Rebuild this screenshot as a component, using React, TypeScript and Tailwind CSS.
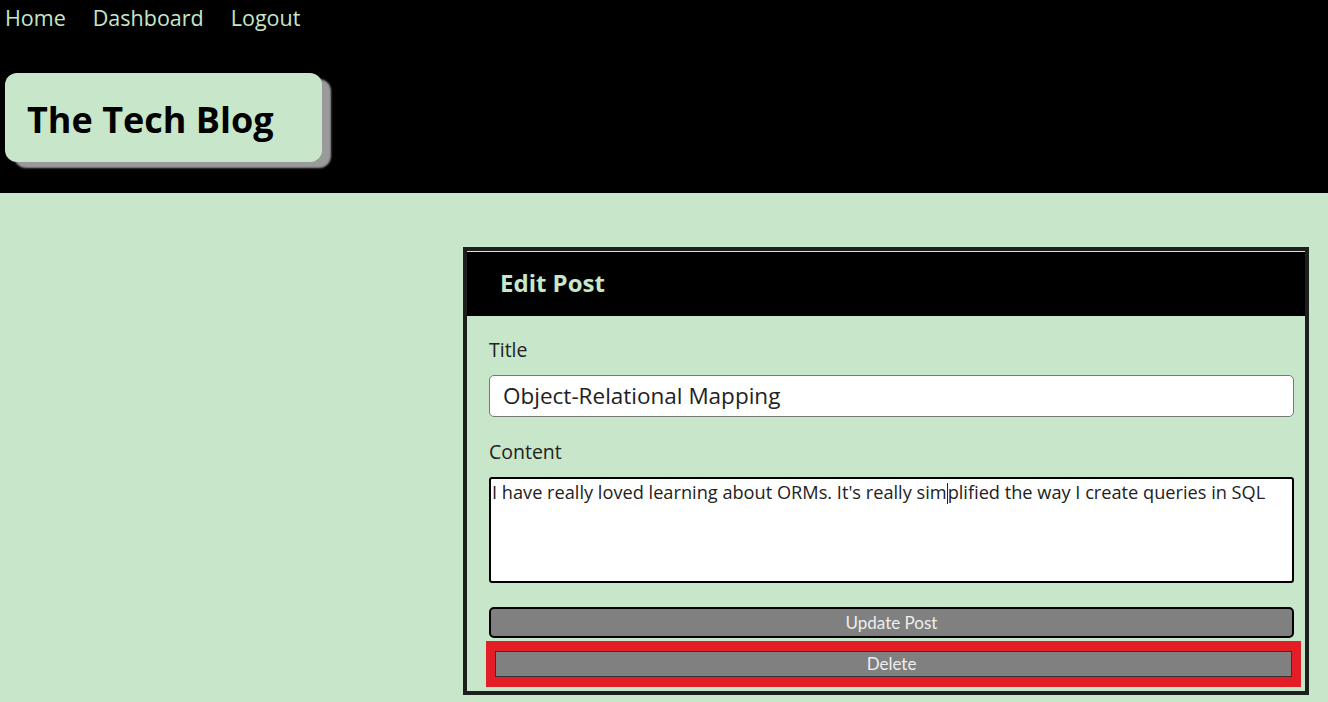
import React from "react";

export default function App() {
  const font = { fontFamily: '"Open Sans", "Noto Sans", sans-serif' };
  return (
    <div className="min-h-screen bg-[#c8e6c9]" style={font}>
      <header className="h-[193px] bg-black pt-[3px]">
        <nav className="flex gap-[27px] pl-[5px] text-[21.5px] leading-[30px] text-[#c8e6c9]">
          <a>Home</a>
          <a>Dashboard</a>
          <a>Logout</a>
        </nav>
        <div className="ml-[5px] mt-[40px] flex h-[89px] w-[317px] items-center rounded-[12px] bg-[#c8e6c9] pl-[22px] pt-[4px] shadow-[9px_6px_2px_#9a9a9a]">
          <h1 className="text-[36px] font-bold leading-none text-black">The Tech Blog</h1>
        </div>
      </header>
      <main className="pl-[463px] pr-[19px] pt-[54px]">
        <div className="border-4 border-[#1c1f1c]">
          <div className="flex h-[65px] items-center border-t border-[#dcdcdc] bg-black pb-[2px] pl-[33px]">
            <h2 className="text-[24px] font-bold text-[#c8e6c9]">Edit Post</h2>
          </div>
          <form className="pb-[4px] pl-[22px] pr-[11px] pt-[22px]">
            <label className="mb-[13px] block text-[19.5px] leading-[24px] text-[#222]">Title</label>
            <div className="flex h-[42px] items-center rounded-[5px] border border-[#777] bg-white pl-[13px] text-[22.5px] text-[#222]">
              Object-Relational Mapping
            </div>
            <label className="mb-[13px] mt-[23px] block text-[19.5px] leading-[24px] text-[#222]">Content</label>
            <div className="h-[106px] rounded-[3px] border-2 border-black bg-white pl-[1px] pt-[1px] text-[18.2px] leading-[24px] text-[#222]">
              I have really loved learning about ORMs. It's really sim
              <span className="inline-block h-[21px] w-0 border-l border-[#222] align-[-5px]"></span>
              plified the way I create queries in SQL
            </div>
            <button
              type="button"
              className="mt-[24px] flex h-[31px] w-full items-center justify-center rounded-[5px] border-2 border-black bg-[#808080] pt-[1px] text-[17px] text-[#eeeeee]"
              style={{ fontFamily: 'Lato, "Open Sans", sans-serif' }}
            >
              Update Post
            </button>
            <div className="ml-[-3px] mr-[-7px] mt-[3px] bg-[#e41e26] px-[9px] py-[10px]">
              <button
                type="button"
                className="flex h-[26px] w-full items-center justify-center border border-[#333] bg-[#808080] pr-[4px] text-[17px] text-[#eeeeee]"
                style={{ fontFamily: 'Lato, "Open Sans", sans-serif' }}
              >
                Delete
              </button>
            </div>
          </form>
        </div>
      </main>
    </div>
  );
}
